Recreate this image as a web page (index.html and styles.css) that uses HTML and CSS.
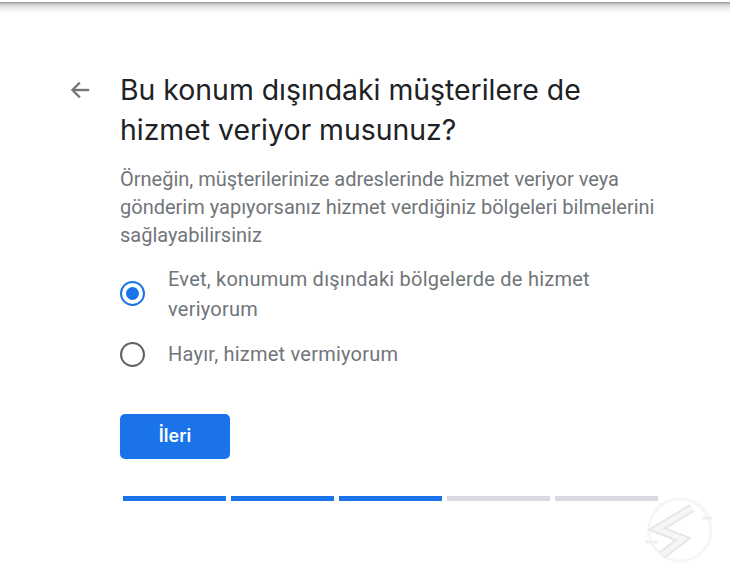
FILE: index.html
```html
<!DOCTYPE html>
<html lang="tr">
<head>
    <meta charset="UTF-8">
    <title>Hizmet bölgeleri</title>
    <link rel="stylesheet" href="styles.css">
</head>
<body>
    <div class="topShadow"></div>
    <div class="page">
        <div class="back">
            <svg width="24" height="24" viewBox="0 0 24 24"><path d="M21 11H6.8l5.6-5.6L11 4l-8 8 8 8 1.400-1.400L6.800 13H21z" fill="#757575" stroke="#757575" stroke-width="0.4"/></svg>
        </div>
        <div class="content">
            <h1 class="title">Bu konum dışındaki müşterilere de hizmet veriyor musunuz?</h1>
            <p class="desc">Örneğin, müşterilerinize adreslerinde hizmet veriyor veya gönderim yapıyorsanız hizmet verdiğiniz bölgeleri bilmelerini sağlayabilirsiniz</p>
            <div class="option">
                <span class="radio checked"></span>
                <span class="label">Evet, konumum dışındaki bölgelerde de hizmet veriyorum</span>
            </div>
            <div class="option">
                <span class="radio"></span>
                <span class="label">Hayır, hizmet vermiyorum</span>
            </div>
            <button class="next">İleri</button>
            <div class="progress">
                <span class="step done"></span>
                <span class="step done"></span>
                <span class="step done"></span>
                <span class="step"></span>
                <span class="step"></span>
            </div>
        </div>
    </div>
    <svg class="watermark" width="70" height="74" viewBox="0 0 70 74" fill="none">
        <circle cx="38" cy="39" r="31" stroke="#f6f6f6" stroke-width="3"/>
        <path d="M3 51h13M60 27h10" stroke="#f0f0f0" stroke-width="3"/>
        <path d="M50 17 15 38l26 10-21 16" stroke="#e6e6e6" stroke-width="9"/>
        <path d="M50 17 15 38l26 10-21 16" stroke="#f6f6f6" stroke-width="5"/>
    </svg>
</body>
</html>
```

FILE: styles.css
```css
body {
    margin: 0;
    background: #fff;
    font-family: Roboto, Arial, sans-serif;
    height: 583px;
    overflow: hidden;
    position: relative;
}
.topShadow {
    height: 12px;
    margin-top: 2px;
    background: linear-gradient(#9a9a9a, #d8d8d8 25%, #f6f6f6 70%, #fff);
}
.page {
    display: flex;
    padding: 56px 70px 0 68px;
}
.back {
    width: 24px;
    height: 24px;
    margin-top: 8px;
    margin-right: 28px;
}
.content {
    flex: 1;
}
.title {
    margin: 0;
    max-width: 500px;
    font-family: Inter, Arial, sans-serif;
    font-size: 28.4px;
    font-weight: 400;
    line-height: 40px;
    color: #202124;
}
.desc {
    margin: 15px 0;
    font-size: 20px;
    line-height: 28px;
    color: #70757a;
}
.option {
    display: flex;
    align-items: center;
    margin-bottom: 15px;
}
.radio {
    flex: none;
    box-sizing: border-box;
    width: 25px;
    height: 25px;
    border: 2px solid #5f6368;
    border-radius: 50%;
    margin-right: 23px;
    position: relative;
}
.radio.checked {
    border-color: #1a73e8;
    margin-bottom: 2px;
}
.radio.checked::after {
    content: "";
    position: absolute;
    left: 4px;
    top: 4px;
    width: 13px;
    height: 13px;
    border-radius: 50%;
    background: #1a73e8;
}
.label {
    font-size: 20px;
    letter-spacing: 0.23px;
    line-height: 30px;
    color: #70757a;
}
.next {
    display: block;
    width: 110px;
    height: 45px;
    margin-top: 45px;
    padding-bottom: 3px;
    border: none;
    border-radius: 5px;
    background: #1a73e8;
    color: #fff;
    font-family: Inter, Arial, sans-serif;
    font-size: 18px;
    font-weight: 600;
}
.progress {
    display: flex;
    gap: 5px;
    margin: 37px 0 0 3px;
}
.step {
    width: 103px;
    height: 5px;
    background: #dadae2;
}
.step.done {
    background: #1a73e8;
}
.watermark {
    position: absolute;
    left: 642px;
    top: 491px;
}
```
